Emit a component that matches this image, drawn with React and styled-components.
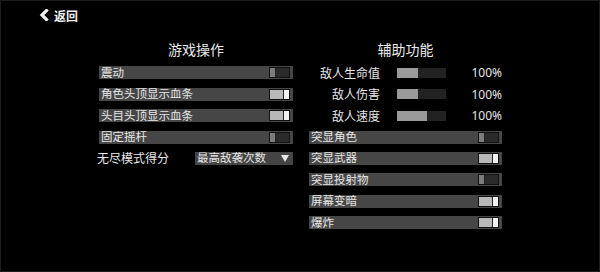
import React from "react";
import styled, { createGlobalStyle } from "styled-components";

const GlobalStyle = createGlobalStyle`
  html, body {
    margin: 0;
    padding: 0;
    background: #000;
  }
  body {
    font-family: "Noto Sans CJK SC", "Noto Sans", sans-serif;
    color: #e2e2e2;
  }
`;

const Screen = styled.div`
  width: 600px;
  height: 272px;
  box-sizing: border-box;
  background: #000;
  box-shadow: inset 0 0 0 1px #1c1c1c;
  position: relative;
  overflow: hidden;
`;

const TopBar = styled.div`
  height: 30px;
  display: flex;
  align-items: center;
  padding-left: 39px;
`;

const BackButton = styled.div`
  display: flex;
  align-items: center;
  gap: 5px;
  font-size: 12px;
  font-weight: bold;
  color: #f0f0f0;
  cursor: pointer;
`;

const Columns = styled.div`
  display: flex;
  gap: 16px;
  padding-left: 99px;
  padding-top: 10px;
`;

const Column = styled.div`
  width: ${({ $w }) => $w}px;
  display: flex;
  flex-direction: column;
  gap: 8.4px;
`;

const Title = styled.div`
  text-align: center;
  font-size: 14px;
  line-height: 18px;
  color: #eaeaea;
`;

const Row = styled.div`
  height: 13px;
  background: #464646;
  display: flex;
  align-items: center;
  justify-content: space-between;
  padding: 0 3px 0 2px;
  font-size: 11.5px;
  color: #e6e6e6;
`;

const Label = styled.span`
  line-height: 13px;
  height: 13px;
  display: block;
  margin-top: -1px;
`;

const Toggle = styled.div`
  width: 21px;
  height: 11px;
  box-sizing: border-box;
  border: 1px solid #121212;
  background: ${({ $on }) => ($on ? "#b8b8b8" : "#2a2a2a")};
  display: flex;
  justify-content: ${({ $on }) => ($on ? "flex-end" : "flex-start")};
`;

const Knob = styled.div`
  width: 5px;
  height: 100%;
  background: ${({ $on }) => ($on ? "#f2f2f2" : "#7c7c7c")};
  border-left: ${({ $on }) => ($on ? "1px solid #222" : "none")};
  border-right: ${({ $on }) => ($on ? "none" : "1px solid #222")};
`;

const SelectRow = styled.div`
  height: 13px;
  display: flex;
  align-items: center;
  justify-content: space-between;
  font-size: 12px;
  color: #e6e6e6;
  margin-left: -2px;
`;

const Select = styled.div`
  width: 98px;
  height: 13px;
  background: #444;
  display: flex;
  align-items: center;
  justify-content: space-between;
  padding: 0 4px 0 2px;
  box-sizing: border-box;
  font-size: 11.5px;
`;

const Caret = styled.span`
  width: 0;
  height: 0;
  border-left: 4.5px solid transparent;
  border-right: 4.5px solid transparent;
  border-top: 7px solid #e6e6e6;
`;

const SliderRow = styled.div`
  height: 13px;
  display: grid;
  grid-template-columns: 71px 49px 1fr;
  column-gap: 17px;
  align-items: center;
  font-size: 12px;
  color: #e6e6e6;
`;

const SliderLabel = styled.div`
  text-align: right;
  line-height: 13px;
  margin-top: -1px;
`;

const Track = styled.div`
  height: 10px;
  background: #222;
  display: flex;
`;

const Fill = styled.div`
  height: 100%;
  background: #9a9a9a;
`;

const Percent = styled.div`
  text-align: right;
  font-family: "Noto Sans", sans-serif;
  font-size: 12px;
  line-height: 13px;
`;

const gameToggles = [
  ["震动", false],
  ["角色头顶显示血条", true],
  ["头目头顶显示血条", true],
  ["固定摇杆", false],
];

const sliders = [
  ["敌人生命值", 43],
  ["敌人伤害", 43],
  ["敌人速度", 61],
];

const assistToggles = [
  ["突显角色", false],
  ["突显武器", true],
  ["突显投射物", false],
  ["屏幕变暗", true],
  ["爆炸", true],
];

const Switch = ({ on }) => (
  <Toggle $on={on}>
    <Knob $on={on} />
  </Toggle>
);

export default function App() {
  return (
    <Screen>
      <GlobalStyle />
      <TopBar>
        <BackButton>
          <svg width="10" height="12" viewBox="0 0 10 12">
            <polyline
              points="7.5,1.5 3,6 7.5,10.5"
              fill="none"
              stroke="#f0f0f0"
              strokeWidth="3.2"
              strokeLinecap="square"
            />
          </svg>
          返回
        </BackButton>
      </TopBar>
      <Columns>
        <Column $w={194}>
          <Title>游戏操作</Title>
          {gameToggles.map(([label, on]) => (
            <Row key={label}>
              <Label>{label}</Label>
              <Switch on={on} />
            </Row>
          ))}
          <SelectRow>
            <Label>无尽模式得分</Label>
            <Select>
              <Label>最高敌袭次数</Label>
              <Caret />
            </Select>
          </SelectRow>
        </Column>
        <Column $w={193}>
          <Title>辅助功能</Title>
          {sliders.map(([label, v]) => (
            <SliderRow key={label}>
              <SliderLabel>{label}</SliderLabel>
              <Track>
                <Fill style={{ width: `${v}%` }} />
              </Track>
              <Percent>100%</Percent>
            </SliderRow>
          ))}
          {assistToggles.map(([label, on]) => (
            <Row key={label}>
              <Label>{label}</Label>
              <Switch on={on} />
            </Row>
          ))}
        </Column>
      </Columns>
    </Screen>
  );
}
